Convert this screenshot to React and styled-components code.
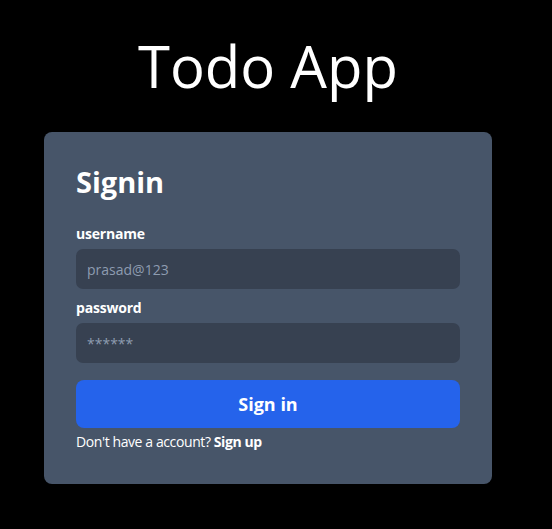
import React from "react";
import styled, { createGlobalStyle } from "styled-components";

const GlobalStyle = createGlobalStyle`
  html, body {
    margin: 0;
    padding: 0;
    background: #000;
  }

  body {
    font-family: "Open Sans", "Noto Sans", sans-serif;
    color: #fff;
  }

  * {
    box-sizing: border-box;
  }
`;

const Page = styled.div`
  width: 536px;
  min-height: 529px;
  display: flex;
  flex-direction: column;
  align-items: center;
  padding-top: 37px;
`;

const Title = styled.h1`
  margin: 0 0 37px;
  font-size: 58px;
  line-height: 58px;
  font-weight: 400;
  color: #fff;
`;

const Card = styled.form`
  width: 448px;
  padding: 32px;
  background: #475569;
  border-radius: 8px;
  display: flex;
  flex-direction: column;
`;

const Heading = styled.h2`
  margin: 0 0 24px;
  font-size: 29px;
  line-height: 36px;
  font-weight: 700;
`;

const Label = styled.label`
  display: block;
  font-size: 14px;
  line-height: 20px;
  font-weight: 700;
  margin-bottom: 5px;
  letter-spacing: -0.2px;
`;

const Input = styled.input`
  width: 100%;
  height: 40px;
  margin: 0 0 ${(p) => p.$gap}px;
  padding: 0 11px;
  border: none;
  border-radius: 7px;
  background: #374151;
  color: #fff;
  font-family: inherit;
  font-size: 14px;
  outline: none;

  &::placeholder {
    color: #8e9cb0;
    opacity: 1;
  }
`;

const Button = styled.button`
  height: 48px;
  border: none;
  border-radius: 8px;
  background: #2563eb;
  color: #fff;
  font-family: inherit;
  font-size: 18px;
  font-weight: 700;
  cursor: pointer;
`;

const Footnote = styled.p`
  margin: 4px 0 0;
  font-size: 14px;
  line-height: 20px;
  letter-spacing: -0.4px;
`;

const SignupLink = styled.a`
  font-weight: 700;
  color: #fff;
  text-decoration: none;
`;

const App = () => {
  return (
    <>
      <GlobalStyle />
      <Page>
        <Title>Todo App</Title>
        <Card onSubmit={(e) => e.preventDefault()}>
          <Heading>Signin</Heading>
          <Label htmlFor="username">username</Label>
          <Input id="username" placeholder="prasad@123" $gap={9} />
          <Label htmlFor="password">password</Label>
          <Input id="password" type="password" placeholder="******" $gap={17} />
          <Button type="submit">Sign in</Button>
          <Footnote>
            Don't have a account? <SignupLink href="#">Sign up</SignupLink>
          </Footnote>
        </Card>
      </Page>
    </>
  );
};

export default App;
